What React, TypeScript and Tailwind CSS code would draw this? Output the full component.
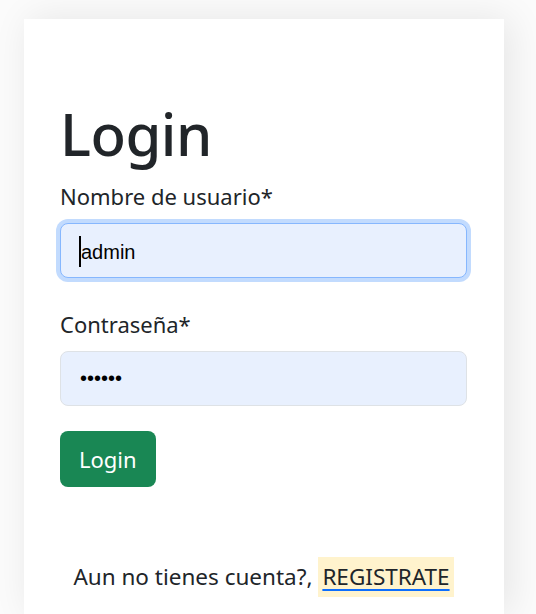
export default function App() {
  const font = { fontFamily: '"Noto Sans", "Open Sans", sans-serif' };
  const mono = { fontFamily: '"Liberation Sans", Arial, sans-serif' };
  return (
    <div className="min-h-screen bg-[#fbfbfb] pl-[24px] pr-[32px] pt-[19px]" style={font}>
      <div className="min-h-[595px] bg-white pl-[36px] pr-[37px] pt-[79px] text-[#212529] shadow-[6px_0_36px_rgba(0,0,0,0.09)]">
        <h1 className="text-[58px] font-medium leading-[72px] tracking-[-0.5px]">Login</h1>
        <form className="mt-[11px]">
          <label className="mb-[12px] block text-[22px] leading-[30px]">Nombre de usuario*</label>
          <div className="relative">
            <input
              type="text"
              defaultValue="admin"
              className="block h-[55px] w-full rounded-[8px] border border-[#86b7fe] bg-[#e8f0fe] pl-[20px] pr-[19px] pt-[3px] text-[20px] text-black shadow-[0_0_0_4px_#c2dbfe] outline-none"
              style={mono}
            />
            {/* caret */}
            <span className="absolute left-[19px] top-[13px] h-[31px] w-[2px] bg-black" />
          </div>
          <label className="mb-[12px] mt-[31px] block text-[22px] leading-[30px]">Contraseña*</label>
          <input
            type="password"
            defaultValue="123456"
            className="block h-[55px] w-full rounded-[8px] border border-[#dee2e6] bg-[#e8f0fe] px-[19px] text-[20px] text-black outline-none"
            style={mono}
          />
          <button
            type="button"
            className="mt-[25px] h-[56px] rounded-[8px] bg-[#198754] px-[19px] text-[22px] text-white"
          >
            Login
          </button>
        </form>
        <p className="mt-[70px] text-center text-[22.5px] leading-[40px]">
          Aun no tienes cuenta?,{" "}
          <span className="inline-block bg-[#fff3cd] px-[4px]">
            <a href="#" className="text-[#212529] underline decoration-[#0d6efd] decoration-2 underline-offset-[4px]">
              REGISTRATE
            </a>
          </span>
        </p>
      </div>
    </div>
  );
}
